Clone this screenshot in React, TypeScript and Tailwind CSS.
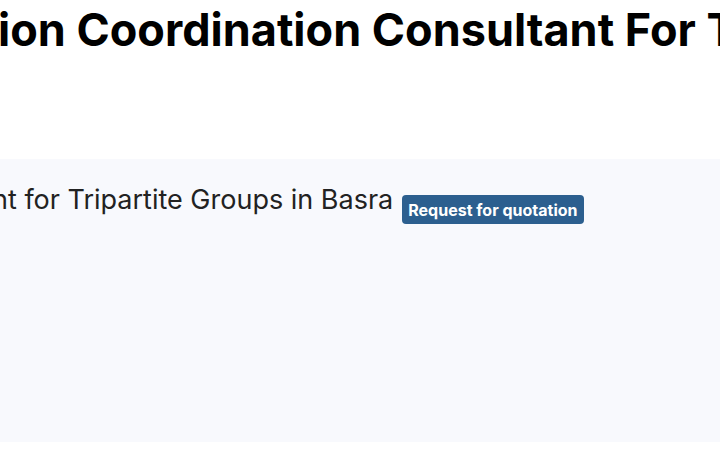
export default function App() {
  return (
    <div className="min-h-screen bg-white font-['Inter',sans-serif] overflow-hidden">
      <div className="h-[159px] pt-[3px]">
        <h1 className="whitespace-nowrap -ml-[2px] text-[45px] leading-[1.2] font-bold text-black">
          ion Coordination Consultant For Tripartite Groups in Basra
        </h1>
      </div>
      <div className="h-[283px] bg-[#f8f9fd] pt-[22px]">
        <div className="flex items-start gap-2 whitespace-nowrap -ml-[8px]">
          <span className="text-[27px] leading-[38px] text-[#222]">
            nt for Tripartite Groups in Basra
          </span>
          <span className="mt-[14px] ml-[1px] rounded-[4px] bg-[#2c5f8f] px-[6px] h-[29px] flex items-center text-[16px] font-bold text-white">
            Request for quotation
          </span>
        </div>
      </div>
    </div>
  );
}
